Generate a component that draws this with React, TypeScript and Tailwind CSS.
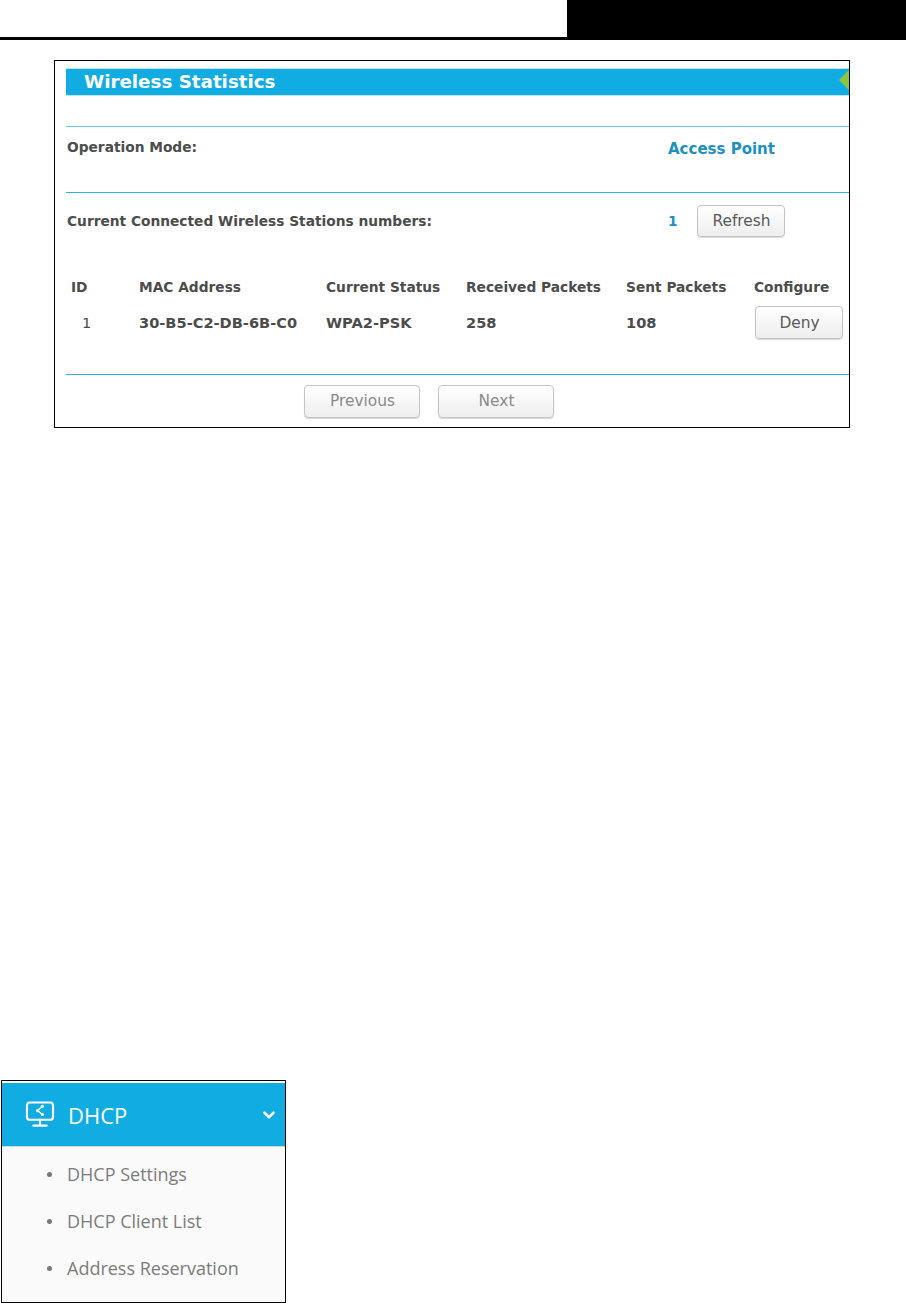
import { ChevronDown } from "lucide-react"

const font = "font-['DejaVu_Sans',sans-serif]"

const GrayButton = ({ label, className, muted }: { label: string; className: string; muted?: boolean }) => (
  <button
    type="button"
    className={`flex items-center justify-center rounded-[4px] border border-[#c4c4c4] bg-gradient-to-b from-white to-[#eeeeee] pt-px pl-px text-[15.4px] shadow-[0_1px_1px_#d8d8d8] ${
      muted ? "text-[#8a8a8a]" : "text-[#5a5a5a]"
    } ${className}`}
  >
    {label}
  </button>
)

const columns = [
  { head: "ID", value: "1", width: "w-[68px]", pad: "pl-[11px] font-normal" },
  { head: "MAC Address", value: "30-B5-C2-DB-6B-C0", width: "w-[187px]", pad: "" },
  { head: "Current Status", value: "WPA2-PSK", width: "w-[140px]", pad: "" },
  { head: "Received Packets", value: "258", width: "w-[160px]", pad: "" },
  { head: "Sent Packets", value: "108", width: "w-[128px]", pad: "" },
]

const WirelessStatistics = () => (
  <section className="mt-[20px] ml-[54px] h-[368px] w-[796px] overflow-hidden border border-black pt-[7px] pl-[11px]">
    <div className="relative flex h-[28px] items-center overflow-hidden border-y border-[#bfe6f6] bg-[#10ace2] pl-[18px] text-[18.3px] leading-none font-bold text-white">
      Wireless Statistics
      <span className="absolute top-[4px] right-[-7px] size-[14px] rotate-45 bg-[#8cc63f]" />
    </div>

    <div className="mt-[30px] h-[66px] border-t border-[#62c5ea] pt-[12px] pl-px">
      <div className="flex text-[13.75px] leading-[16px] font-bold">
        <span className="w-[601px] text-[#4c4c4c]">Operation Mode:</span>
        <span className="pt-[2px] text-[15px] text-[#1d8fc0]">Access Point</span>
      </div>
    </div>

    <div className="h-[182px] border-t border-[#29b4e8] pl-px">
      <div className="flex h-[56px] items-center text-[13.75px] font-bold">
        <span className="w-[601px] text-[#4c4c4c]">Current Connected Wireless Stations numbers:</span>
        <span className="w-[29px] text-[#1d8fc0]">1</span>
        <GrayButton label="Refresh" className="h-[32px] w-[88px] font-normal" />
      </div>

      <div className="mt-[30px] flex pl-[4px] text-[13.75px] leading-[16px] font-bold text-[#4c4c4c]">
        {columns.map((col) => (
          <div key={col.head} className={col.width}>
            <div>{col.head}</div>
            <div className={`mt-[20px] text-[14.6px] ${col.pad}`}>{col.value}</div>
          </div>
        ))}
        <div>
          <div>Configure</div>
          <GrayButton label="Deny" className="mt-[11px] ml-px h-[33px] w-[88px] font-normal" />
        </div>
      </div>
    </div>

    <div className="flex gap-[18px] border-t border-[#29b4e8] pt-[10px] pl-[238px]">
      <GrayButton label="Previous" muted className="h-[33px] w-[116px]" />
      <GrayButton label="Next" muted className="h-[33px] w-[116px]" />
    </div>
  </section>
)

const DhcpMenu = () => (
  <aside className="mt-[652px] ml-px h-[223px] w-[285px] border border-black bg-[#fafafa]">
    <div className="mt-[2px] flex h-[64px] items-center border-b border-[#d6d6d6] bg-[#10ace2] pr-[7px] pl-[23px] text-white">
      <svg viewBox="0 0 30 28" className="h-[27px] w-[30px]" fill="none" stroke="currentColor" strokeWidth="2.2" strokeLinecap="round" strokeLinejoin="round">
        <rect x="1.5" y="1.5" width="27" height="18" rx="3" />
        <path d="M15 19.5v5M8 25.5h14" />
        <path d="M17.5 5.5 12.5 10 17.5 14" strokeWidth="1.5" />
        <circle cx="12.5" cy="10" r="1.6" fill="currentColor" stroke="none" />
        <circle cx="17.5" cy="5.5" r="1.6" fill="currentColor" stroke="none" />
        <circle cx="17.5" cy="14" r="1.6" fill="currentColor" stroke="none" />
      </svg>
      <span className="ml-[13px] flex-1 font-['Open_Sans',sans-serif] text-[22px] leading-none">DHCP</span>
      <ChevronDown className="size-[18px]" strokeWidth={3.5} />
    </div>
    <ul className="pt-[4px] pl-[45px] font-['Open_Sans',sans-serif] text-[18px] leading-[47px] text-[#7c7c7c]">
      {["DHCP Settings", "DHCP Client List", "Address Reservation"].map((item) => (
        <li key={item} className="flex items-center gap-[15px]">
          <span className="size-[5px] rounded-full bg-[#777777]" />
          {item}
        </li>
      ))}
    </ul>
  </aside>
)

export default function App() {
  return (
    <main className={`h-[1303px] w-[906px] overflow-hidden bg-white ${font}`}>
      <header className="flex h-[40px] border-b-[3px] border-black">
        <div className="flex-1" />
        <div className="w-[339px] bg-black" />
      </header>
      <WirelessStatistics />
      <DhcpMenu />
    </main>
  )
}
